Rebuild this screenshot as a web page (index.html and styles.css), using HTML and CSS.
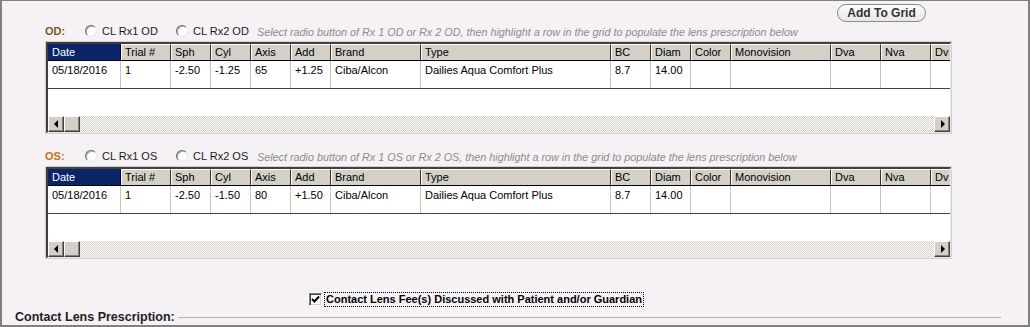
FILE: index.html
```html
<!DOCTYPE html>
<html>
<head>
<meta charset="utf-8">
<link rel="stylesheet" href="styles.css">
</head>
<body>
<div class="panel">
  <div class="toolbar"><button class="add-btn">Add To Grid</button></div>

  <section class="eye eye-od">
    <div class="eye-row">
      <span class="eye-label od">OD:</span>
      <label class="radio-opt opt1"><span class="radio"></span>CL Rx1 OD</label>
      <label class="radio-opt opt2"><span class="radio"></span>CL Rx2 OD</label>
      <span class="hint">Select radio button of Rx 1 OD or Rx 2 OD, then highlight a row in the grid to populate the lens prescription below</span>
    </div>
    <div class="grid">
      <div class="grid-inner">
        <div class="grid-head">
          <div class="cell c-date selected">Date</div>
          <div class="cell c-trial">Trial #</div>
          <div class="cell c-40">Sph</div>
          <div class="cell c-40">Cyl</div>
          <div class="cell c-40">Axis</div>
          <div class="cell c-40">Add</div>
          <div class="cell c-brand">Brand</div>
          <div class="cell c-type">Type</div>
          <div class="cell c-40">BC</div>
          <div class="cell c-40">Diam</div>
          <div class="cell c-40">Color</div>
          <div class="cell c-mono">Monovision</div>
          <div class="cell c-50">Dva</div>
          <div class="cell c-50">Nva</div>
          <div class="cell c-50">Dv</div>
        </div>
        <div class="grid-row">
          <div class="cell c-date">05/18/2016</div>
          <div class="cell c-trial">1</div>
          <div class="cell c-40">-2.50</div>
          <div class="cell c-40">-1.25</div>
          <div class="cell c-40">65</div>
          <div class="cell c-40">+1.25</div>
          <div class="cell c-brand">Ciba/Alcon</div>
          <div class="cell c-type">Dailies Aqua Comfort Plus</div>
          <div class="cell c-40">8.7</div>
          <div class="cell c-40">14.00</div>
          <div class="cell c-40"></div>
          <div class="cell c-mono"></div>
          <div class="cell c-50"></div>
          <div class="cell c-50"></div>
          <div class="cell c-50"></div>
        </div>
        <div class="grid-empty"></div>
        <div class="hscroll">
          <span class="sb-btn"><span class="arrow-left"></span></span>
          <span class="sb-thumb"></span>
          <span class="sb-track"></span>
          <span class="sb-btn"><span class="arrow-right"></span></span>
        </div>
      </div>
    </div>
  </section>

  <section class="eye eye-os">
    <div class="eye-row">
      <span class="eye-label os">OS:</span>
      <label class="radio-opt opt1"><span class="radio"></span>CL Rx1 OS</label>
      <label class="radio-opt opt2"><span class="radio"></span>CL Rx2 OS</label>
      <span class="hint">Select radio button of Rx 1 OS or Rx 2 OS, then highlight a row in the grid to populate the lens prescription below</span>
    </div>
    <div class="grid">
      <div class="grid-inner">
        <div class="grid-head">
          <div class="cell c-date selected">Date</div>
          <div class="cell c-trial">Trial #</div>
          <div class="cell c-40">Sph</div>
          <div class="cell c-40">Cyl</div>
          <div class="cell c-40">Axis</div>
          <div class="cell c-40">Add</div>
          <div class="cell c-brand">Brand</div>
          <div class="cell c-type">Type</div>
          <div class="cell c-40">BC</div>
          <div class="cell c-40">Diam</div>
          <div class="cell c-40">Color</div>
          <div class="cell c-mono">Monovision</div>
          <div class="cell c-50">Dva</div>
          <div class="cell c-50">Nva</div>
          <div class="cell c-50">Dv</div>
        </div>
        <div class="grid-row">
          <div class="cell c-date">05/18/2016</div>
          <div class="cell c-trial">1</div>
          <div class="cell c-40">-2.50</div>
          <div class="cell c-40">-1.50</div>
          <div class="cell c-40">80</div>
          <div class="cell c-40">+1.50</div>
          <div class="cell c-brand">Ciba/Alcon</div>
          <div class="cell c-type">Dailies Aqua Comfort Plus</div>
          <div class="cell c-40">8.7</div>
          <div class="cell c-40">14.00</div>
          <div class="cell c-40"></div>
          <div class="cell c-mono"></div>
          <div class="cell c-50"></div>
          <div class="cell c-50"></div>
          <div class="cell c-50"></div>
        </div>
        <div class="grid-empty"></div>
        <div class="hscroll">
          <span class="sb-btn"><span class="arrow-left"></span></span>
          <span class="sb-thumb"></span>
          <span class="sb-track"></span>
          <span class="sb-btn"><span class="arrow-right"></span></span>
        </div>
      </div>
    </div>
  </section>

  <div class="fee-row">
    <span class="checkbox"><svg width="9" height="9" viewBox="0 0 9 9"><path d="M1 4 L3.5 6.5 L8 1.5" fill="none" stroke="#000" stroke-width="2"/></svg></span>
    <span class="fee-label">Contact Lens Fee(s) Discussed with Patient and/or Guardian</span>
  </div>

  <div class="legend">
    <span class="legend-text">Contact Lens Prescription:</span>
    <span class="legend-line"></span>
  </div>
</div>
</body>
</html>
```

FILE: styles.css
```css
* { box-sizing: border-box; }
html, body { margin: 0; padding: 0; background: #f5f1f5; }
body { font-family: "Liberation Sans", Arial, sans-serif; font-size: 11px; color: #000; }

.panel {
  width: 1030px;
  height: 327px;
  background: #f5f1f5;
  border-style: solid;
  border-color: #808080;
  border-width: 1px 2px 2px 2px;
  overflow: hidden;
}

.toolbar {
  display: flex;
  justify-content: flex-end;
  padding-right: 102px;
  margin-top: 3px;
  height: 18px;
}
.add-btn {
  width: 89px;
  height: 18px;
  padding: 0;
  border: 1px solid #8a8a8a;
  border-radius: 9px;
  background: linear-gradient(#fbfbfb, #e7e7e7);
  font-family: "Liberation Sans", Arial, sans-serif;
  font-weight: bold;
  font-size: 12px;
  color: #333;
  line-height: 16px;
}

.eye { margin-left: 43px; }
.eye-od { margin-top: 2px; }
.eye-os { margin-top: 15px; }

.eye-row {
  display: flex;
  align-items: center;
  height: 14px;
  margin-bottom: 3px;
  white-space: nowrap;
}
.eye-label {
  width: 40px;
  font-weight: bold;
  font-size: 11px;
}
.eye-label.od { color: #7a5a1c; }
.eye-label.os { color: #b97a12; }

.radio-opt {
  display: flex;
  align-items: center;
  gap: 5px;
  color: #1a1a1a;
}
.radio-opt.opt1 { width: 91px; }
.radio-opt.opt2 { width: 81px; }
.radio {
  width: 12px;
  height: 12px;
  border-radius: 50%;
  border: 1px solid;
  border-color: #6a6a6a #e8e8e8 #e8e8e8 #6a6a6a;
  background: #fff;
  box-shadow: inset 1px 1px 0 #b0b0b0;
  flex: none;
}
.hint {
  font-style: italic;
  font-size: 10.8px;
  color: #8c8c8c;
  padding-top: 1px;
}

.grid {
  width: 907px;
  height: 93px;
  border: 1px solid #d4d0c8;
}
.grid-inner {
  height: 100%;
  border-style: solid;
  border-width: 2px 1px 1px 2px;
  border-color: #404040 #e8e8e8 #e8e8e8 #404040;
  background: #fff;
  display: flex;
  flex-direction: column;
  overflow: hidden;
}

.grid-head, .grid-row {
  display: flex;
  overflow: hidden;
  flex: none;
}
.grid-head {
  height: 17px;
  border-bottom: 1px solid #000;
  background: #d4d0c8;
}
.grid-head .cell {
  height: 16px;
  line-height: 14px;
  padding-left: 3px;
  background: #d4d0c8;
  border-top: 1px solid #fff;
  border-left: 1px solid #fff;
  border-right: 1px solid #303030;
}
.grid-head .cell.selected {
  background: #0a246a;
  color: #fff;
  border-top-color: #0a246a;
  border-left-color: #0a246a;
  border-right-color: #000;
}
.grid-row {
  height: 28px;
  border-bottom: 1px solid #404040;
}
.grid-row .cell {
  height: 27px;
  padding: 3px 0 0 4px;
  line-height: 13px;
  border-right: 1px solid #c4c4c4;
}
.cell { flex: none; white-space: nowrap; overflow: hidden; }
.c-date { width: 73px; }
.c-trial { width: 50px; }
.c-40 { width: 40px; }
.c-50 { width: 50px; }
.c-brand { width: 90px; }
.c-type { width: 190px; }
.c-mono { width: 100px; }

.grid-empty { height: 27px; flex: none; }

.hscroll {
  display: flex;
  height: 16px;
  flex: none;
}
.sb-btn, .sb-thumb {
  width: 16px;
  height: 16px;
  flex: none;
  background: #d4d0c8;
  border: 1px solid;
  border-color: #fff #404040 #404040 #fff;
  box-shadow: inset -1px -1px 0 #808080;
  display: flex;
  align-items: center;
  justify-content: center;
}
.sb-track {
  flex: 1;
  background: repeating-conic-gradient(#d4d0c8 0 25%, #fff 0 50%) 0 0 / 2px 2px;
}
.arrow-left {
  width: 0; height: 0;
  border-top: 4px solid transparent;
  border-bottom: 4px solid transparent;
  border-right: 4px solid #000;
  margin-left: -1px;
}
.arrow-right {
  width: 0; height: 0;
  border-top: 4px solid transparent;
  border-bottom: 4px solid transparent;
  border-left: 4px solid #000;
  margin-left: 1px;
}

.fee-row {
  display: flex;
  align-items: center;
  height: 14px;
  margin-top: 33px;
  padding-left: 307px;
}
.checkbox {
  width: 13px;
  height: 13px;
  flex: none;
  border: 1px solid;
  border-color: #808080 #fff #fff #808080;
  box-shadow: inset 1px 1px 0 #404040, inset -1px -1px 0 #d4d0c8;
  background: #fff;
  display: flex;
  align-items: center;
  justify-content: center;
  margin-right: 3px;
}
.fee-label {
  font-weight: bold;
  font-size: 11px;
  outline: 1px dotted #000;
  padding: 0 1px;
  line-height: 13px;
  white-space: nowrap;
}

.legend {
  display: flex;
  align-items: center;
  height: 17px;
  margin-top: 2px;
  padding-left: 13px;
}
.legend-text {
  font-weight: bold;
  font-size: 12.5px;
  color: #222;
  white-space: nowrap;
}
.legend-line {
  flex: 1;
  height: 1px;
  background: #b4b0b4;
  margin-left: 3px;
  margin-right: 27px;
  margin-top: 2px;
}
```
